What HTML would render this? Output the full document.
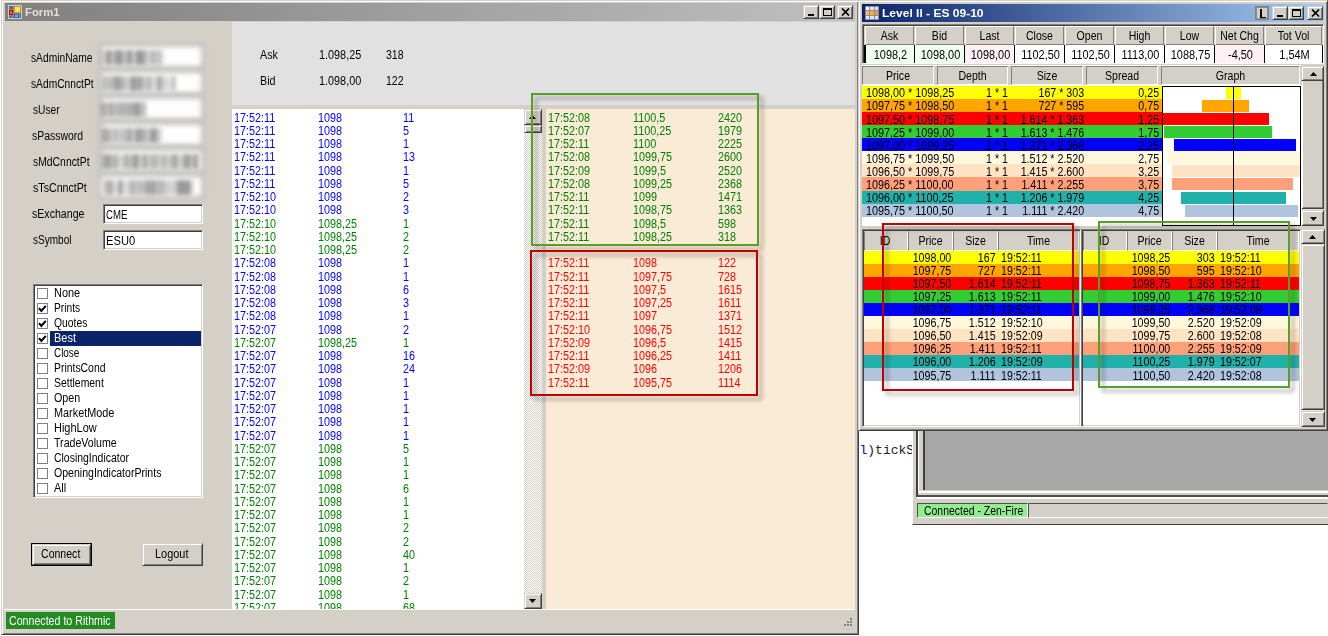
<!DOCTYPE html><html><head><meta charset="utf-8"><style>
*{margin:0;padding:0;box-sizing:border-box}
html,body{width:1328px;height:636px;overflow:hidden;background:#fff;font-family:"Liberation Sans",sans-serif;font-size:12px;color:#000}
.ab{position:absolute}
.t{position:absolute;white-space:nowrap}
.raised{border-style:solid;border-width:1px;border-color:#D4D0C8 #404040 #404040 #D4D0C8;box-shadow:inset 1px 1px 0 #fff,inset -1px -1px 0 #808080;background:#D4D0C8}
.sunken{border-style:solid;border-width:1px;border-color:#808080 #fff #fff #808080;box-shadow:inset 1px 1px 0 #404040, inset -1px -1px 0 #D4D0C8}
.hdr{position:absolute;background:#D4D0C8;border-style:solid;border-width:1px;border-color:#fff #808080 #808080 #fff}
</style></head><body>

<div class="ab" style="left:1px;top:0;width:858px;height:635px;background:#D4D0C8;border:1px solid;border-color:#D4D0C8 #404040 #404040 #D4D0C8;box-shadow:inset 1px 1px 0 #fff, inset -1px -1px 0 #808080"></div>
<div class="ab" style="left:5px;top:3px;width:850px;height:18px;background:linear-gradient(to right,#808080,#C0C0C0)"></div>
<svg class="ab" style="left:8px;top:5px" width="14" height="14" viewBox="0 0 14 14">
<rect x="0" y="0" width="14" height="14" fill="#c8ccd4"/>
<rect x="1" y="1" width="12" height="12" fill="#8c8c8c"/>
<rect x="1" y="1" width="4" height="3" fill="#6a6a6a"/>
<rect x="1" y="5" width="4" height="5" fill="#a01010"/><rect x="2" y="6" width="2" height="3" fill="#f06060"/>
<rect x="6" y="1" width="7" height="7" fill="#c89800"/><rect x="7" y="2" width="5" height="5" fill="#ffe070"/>
<rect x="6" y="9" width="5" height="4" fill="#2060d0"/><rect x="7" y="10" width="3" height="2" fill="#80b8ff"/>
<rect x="1" y="11" width="2" height="2" fill="#6a6a6a"/><rect x="4" y="11" width="1" height="2" fill="#6a6a6a"/><rect x="12" y="9" width="1" height="4" fill="#6a6a6a"/>
</svg>
<div class="t" style="left:24.80px;top:7.21px;font-size:11.5px;line-height:11.5px;color:#E4E0D8;font-weight:bold;transform:scaleX(0.98);transform-origin:0 0;">Form1</div>
<div class="ab raised" style="left:803px;top:5px;width:16px;height:14px"><div class="ab" style="left:4px;top:8px;width:6px;height:2px;background:#000"></div></div>
<div class="ab raised" style="left:819px;top:5px;width:16px;height:14px"><div class="ab" style="left:3px;top:2px;width:9px;height:8px;border:1px solid #000;border-top-width:2px"></div></div>
<div class="ab raised" style="left:837px;top:5px;width:16px;height:14px"><svg class="ab" style="left:3px;top:2px" width="9" height="8"><path d="M1 0.5L8 7.5M8 0.5L1 7.5" stroke="#000" stroke-width="1.7"/></svg></div>
<div class="t" style="left:31.20px;top:52.40px;font-size:12px;line-height:12px;transform:scaleX(0.854);transform-origin:0 0;">sAdminName</div>
<div class="t" style="left:31.20px;top:78.40px;font-size:12px;line-height:12px;transform:scaleX(0.854);transform-origin:0 0;">sAdmCnnctPt</div>
<div class="t" style="left:33.30px;top:104.40px;font-size:12px;line-height:12px;transform:scaleX(0.85);transform-origin:0 0;">sUser</div>
<div class="t" style="left:31.50px;top:130.40px;font-size:12px;line-height:12px;transform:scaleX(0.87);transform-origin:0 0;">sPassword</div>
<div class="t" style="left:33.30px;top:156.40px;font-size:12px;line-height:12px;transform:scaleX(0.865);transform-origin:0 0;">sMdCnnctPt</div>
<div class="t" style="left:33.30px;top:182.40px;font-size:12px;line-height:12px;transform:scaleX(0.887);transform-origin:0 0;">sTsCnnctPt</div>
<div class="t" style="left:31.50px;top:208.40px;font-size:12px;line-height:12px;transform:scaleX(0.883);transform-origin:0 0;">sExchange</div>
<div class="t" style="left:33.30px;top:234.40px;font-size:12px;line-height:12px;transform:scaleX(0.837);transform-origin:0 0;">sSymbol</div>
<div class="ab" style="left:98px;top:43.4px;width:107px;height:27px;background:#c6c4c0;filter:blur(2.5px)"></div>
<div class="ab" style="left:102px;top:47.4px;width:99px;height:19px;background:#fefefe;filter:blur(2.5px)"></div>
<div class="ab" style="left:101px;top:49.9px;width:62px;height:15px;background:linear-gradient(90deg,#8a8a8a 0px 2px,#e0e0e0 2px 5px,#7a7a7a 5px 6px,#7a7a7a 6px 10px,#c8c8c8 10px 12px,#c8c8c8 12px 13px,#7a7a7a 13px 15px,#b0b0b0 15px 16px,#7a7a7a 16px 19px,#7a7a7a 19px 21px,#b0b0b0 21px 25px,#c8c8c8 25px 26px,#8a8a8a 26px 27px,#7a7a7a 27px 31px,#c8c8c8 31px 35px,#7a7a7a 35px 38px,#7a7a7a 38px 40px,#8a8a8a 40px 44px,#b0b0b0 44px 46px,#c8c8c8 46px 48px,#c8c8c8 48px 49px,#c8c8c8 49px 51px,#7a7a7a 51px 53px,#c8c8c8 53px 57px,#9a9a9a 57px 59px,#c8c8c8 59px 60px,#c8c8c8 60px 61px,#c8c8c8 61px 62px);filter:blur(2.2px);opacity:.8"></div>
<div class="ab" style="left:98px;top:69.4px;width:107px;height:27px;background:#c6c4c0;filter:blur(2.5px)"></div>
<div class="ab" style="left:102px;top:73.4px;width:99px;height:19px;background:#fefefe;filter:blur(2.5px)"></div>
<div class="ab" style="left:101px;top:75.9px;width:75px;height:15px;background:linear-gradient(90deg,#b0b0b0 0px 2px,#b0b0b0 2px 6px,#b0b0b0 6px 8px,#b0b0b0 8px 12px,#9a9a9a 12px 14px,#8a8a8a 14px 16px,#7a7a7a 16px 18px,#9a9a9a 18px 22px,#b0b0b0 22px 26px,#e0e0e0 26px 28px,#9a9a9a 28px 31px,#7a7a7a 31px 35px,#c8c8c8 35px 36px,#8a8a8a 36px 39px,#8a8a8a 39px 41px,#b0b0b0 41px 44px,#e0e0e0 44px 45px,#c8c8c8 45px 46px,#9a9a9a 46px 50px,#e0e0e0 50px 52px,#c8c8c8 52px 54px,#c8c8c8 54px 57px,#7a7a7a 57px 60px,#9a9a9a 60px 61px,#e0e0e0 61px 64px,#7a7a7a 64px 65px,#e0e0e0 65px 67px,#e0e0e0 67px 71px,#9a9a9a 71px 74px,#e0e0e0 74px 77px);filter:blur(2.2px);opacity:.8"></div>
<div class="ab" style="left:98px;top:95.4px;width:107px;height:27px;background:#c6c4c0;filter:blur(2.5px)"></div>
<div class="ab" style="left:102px;top:99.4px;width:99px;height:19px;background:#fefefe;filter:blur(2.5px)"></div>
<div class="ab" style="left:101px;top:101.9px;width:45px;height:15px;background:linear-gradient(90deg,#7a7a7a 0px 2px,#9a9a9a 2px 5px,#c8c8c8 5px 7px,#b0b0b0 7px 8px,#8a8a8a 8px 9px,#8a8a8a 9px 11px,#b0b0b0 11px 13px,#b0b0b0 13px 16px,#8a8a8a 16px 17px,#b0b0b0 17px 20px,#9a9a9a 20px 24px,#b0b0b0 24px 26px,#9a9a9a 26px 30px,#9a9a9a 30px 33px,#8a8a8a 33px 36px,#7a7a7a 36px 38px,#8a8a8a 38px 40px,#e0e0e0 40px 42px,#7a7a7a 42px 44px,#c8c8c8 44px 47px);filter:blur(2.2px);opacity:.8"></div>
<div class="ab" style="left:98px;top:121.4px;width:107px;height:27px;background:#c6c4c0;filter:blur(2.5px)"></div>
<div class="ab" style="left:102px;top:125.4px;width:99px;height:19px;background:#fefefe;filter:blur(2.5px)"></div>
<div class="ab" style="left:101px;top:127.9px;width:61px;height:15px;background:linear-gradient(90deg,#9a9a9a 0px 2px,#7a7a7a 2px 4px,#b0b0b0 4px 6px,#9a9a9a 6px 10px,#c8c8c8 10px 14px,#8a8a8a 14px 16px,#c8c8c8 16px 20px,#b0b0b0 20px 21px,#b0b0b0 21px 25px,#b0b0b0 25px 28px,#7a7a7a 28px 31px,#e0e0e0 31px 34px,#7a7a7a 34px 37px,#7a7a7a 37px 39px,#b0b0b0 39px 41px,#7a7a7a 41px 43px,#c8c8c8 43px 45px,#7a7a7a 45px 46px,#c8c8c8 46px 47px,#c8c8c8 47px 49px,#9a9a9a 49px 50px,#7a7a7a 50px 54px,#8a8a8a 54px 55px,#b0b0b0 55px 59px,#e0e0e0 59px 61px);filter:blur(2.2px);opacity:.8"></div>
<div class="ab" style="left:98px;top:147.4px;width:107px;height:27px;background:#c6c4c0;filter:blur(2.5px)"></div>
<div class="ab" style="left:102px;top:151.4px;width:99px;height:19px;background:#fefefe;filter:blur(2.5px)"></div>
<div class="ab" style="left:101px;top:153.9px;width:98px;height:15px;background:linear-gradient(90deg,#9a9a9a 0px 2px,#9a9a9a 2px 6px,#7a7a7a 6px 9px,#b0b0b0 9px 10px,#b0b0b0 10px 13px,#9a9a9a 13px 16px,#8a8a8a 16px 17px,#e0e0e0 17px 18px,#e0e0e0 18px 20px,#b0b0b0 20px 22px,#c8c8c8 22px 24px,#8a8a8a 24px 25px,#9a9a9a 25px 29px,#e0e0e0 29px 31px,#7a7a7a 31px 35px,#9a9a9a 35px 39px,#e0e0e0 39px 40px,#c8c8c8 40px 42px,#8a8a8a 42px 44px,#8a8a8a 44px 46px,#c8c8c8 46px 50px,#9a9a9a 50px 54px,#c8c8c8 54px 56px,#8a8a8a 56px 58px,#e0e0e0 58px 61px,#8a8a8a 61px 63px,#b0b0b0 63px 67px,#e0e0e0 67px 69px,#7a7a7a 69px 70px,#b0b0b0 70px 72px,#8a8a8a 72px 74px,#9a9a9a 74px 78px,#e0e0e0 78px 81px,#9a9a9a 81px 83px,#8a8a8a 83px 84px,#8a8a8a 84px 85px,#8a8a8a 85px 88px,#8a8a8a 88px 90px,#c8c8c8 90px 93px,#7a7a7a 93px 97px,#e0e0e0 97px 100px);filter:blur(2.2px);opacity:.8"></div>
<div class="ab" style="left:98px;top:173.4px;width:107px;height:27px;background:#c6c4c0;filter:blur(2.5px)"></div>
<div class="ab" style="left:102px;top:177.4px;width:99px;height:19px;background:#fefefe;filter:blur(2.5px)"></div>
<div class="ab" style="left:101px;top:179.9px;width:93px;height:15px;background:linear-gradient(90deg,#e0e0e0 0px 2px,#e0e0e0 2px 3px,#b0b0b0 3px 4px,#b0b0b0 4px 6px,#b0b0b0 6px 8px,#7a7a7a 8px 10px,#b0b0b0 10px 13px,#e0e0e0 13px 16px,#e0e0e0 16px 17px,#8a8a8a 17px 19px,#7a7a7a 19px 21px,#c8c8c8 21px 23px,#e0e0e0 23px 26px,#c8c8c8 26px 28px,#b0b0b0 28px 32px,#8a8a8a 32px 34px,#c8c8c8 34px 38px,#7a7a7a 38px 40px,#e0e0e0 40px 41px,#c8c8c8 41px 42px,#b0b0b0 42px 44px,#8a8a8a 44px 46px,#9a9a9a 46px 47px,#9a9a9a 47px 49px,#8a8a8a 49px 53px,#9a9a9a 53px 57px,#c8c8c8 57px 59px,#8a8a8a 59px 62px,#e0e0e0 62px 63px,#b0b0b0 63px 65px,#c8c8c8 65px 69px,#c8c8c8 69px 72px,#c8c8c8 72px 74px,#c8c8c8 74px 76px,#7a7a7a 76px 80px,#8a8a8a 80px 83px,#7a7a7a 83px 87px,#8a8a8a 87px 89px,#b0b0b0 89px 91px,#e0e0e0 91px 95px);filter:blur(2.2px);opacity:.8"></div>
<div class="ab sunken" style="left:103px;top:203.9px;width:100px;height:20px;background:#fff"></div>
<div class="t" style="left:106.00px;top:208.80px;font-size:12px;line-height:12px;transform:scaleX(0.8);transform-origin:0 0;">CME</div>
<div class="ab sunken" style="left:103px;top:229.9px;width:100px;height:20px;background:#fff"></div>
<div class="t" style="left:106.00px;top:234.80px;font-size:12px;line-height:12px;transform:scaleX(0.93);transform-origin:0 0;">ESU0</div>
<div class="ab sunken" style="left:33px;top:284px;width:170px;height:214px;background:#fff"></div>
<div class="ab" style="left:37px;top:288.0px;width:11px;height:11px;border:1px solid #808080;background:#fff"></div>
<div class="t" style="left:54.20px;top:286.70px;font-size:12px;line-height:12px;transform:scaleX(0.914);transform-origin:0 0;">None</div>
<div class="ab" style="left:37px;top:303.0px;width:11px;height:11px;border:1px solid #808080;background:#fff"></div>
<svg class="ab" style="left:37px;top:303.0px" width="11" height="11"><path d="M2 5.2L4.3 8L8.8 2.8" stroke="#000" stroke-width="2" fill="none"/></svg>
<div class="t" style="left:54.20px;top:301.75px;font-size:12px;line-height:12px;transform:scaleX(0.853);transform-origin:0 0;">Prints</div>
<div class="ab" style="left:37px;top:317.9px;width:11px;height:11px;border:1px solid #808080;background:#fff"></div>
<svg class="ab" style="left:37px;top:317.9px" width="11" height="11"><path d="M2 5.2L4.3 8L8.8 2.8" stroke="#000" stroke-width="2" fill="none"/></svg>
<div class="t" style="left:54.20px;top:316.80px;font-size:12px;line-height:12px;transform:scaleX(0.864);transform-origin:0 0;">Quotes</div>
<div class="ab" style="left:37px;top:332.9px;width:11px;height:11px;border:1px solid #808080;background:#fff"></div>
<svg class="ab" style="left:37px;top:332.9px" width="11" height="11"><path d="M2 5.2L4.3 8L8.8 2.8" stroke="#000" stroke-width="2" fill="none"/></svg>
<div class="ab" style="left:50px;top:331.0px;width:151px;height:15px;background:#0A246A"></div>
<div class="t" style="left:54.20px;top:331.85px;font-size:12px;line-height:12px;color:#fff;transform:scaleX(0.913);transform-origin:0 0;">Best</div>
<div class="ab" style="left:37px;top:347.8px;width:11px;height:11px;border:1px solid #808080;background:#fff"></div>
<div class="t" style="left:54.20px;top:346.90px;font-size:12px;line-height:12px;transform:scaleX(0.826);transform-origin:0 0;">Close</div>
<div class="ab" style="left:37px;top:362.8px;width:11px;height:11px;border:1px solid #808080;background:#fff"></div>
<div class="t" style="left:54.20px;top:361.95px;font-size:12px;line-height:12px;transform:scaleX(0.867);transform-origin:0 0;">PrintsCond</div>
<div class="ab" style="left:37px;top:377.8px;width:11px;height:11px;border:1px solid #808080;background:#fff"></div>
<div class="t" style="left:54.20px;top:377.00px;font-size:12px;line-height:12px;transform:scaleX(0.868);transform-origin:0 0;">Settlement</div>
<div class="ab" style="left:37px;top:392.7px;width:11px;height:11px;border:1px solid #808080;background:#fff"></div>
<div class="t" style="left:54.20px;top:392.05px;font-size:12px;line-height:12px;transform:scaleX(0.897);transform-origin:0 0;">Open</div>
<div class="ab" style="left:37px;top:407.7px;width:11px;height:11px;border:1px solid #808080;background:#fff"></div>
<div class="t" style="left:54.20px;top:407.10px;font-size:12px;line-height:12px;transform:scaleX(0.905);transform-origin:0 0;">MarketMode</div>
<div class="ab" style="left:37px;top:422.6px;width:11px;height:11px;border:1px solid #808080;background:#fff"></div>
<div class="t" style="left:54.20px;top:422.15px;font-size:12px;line-height:12px;transform:scaleX(0.913);transform-origin:0 0;">HighLow</div>
<div class="ab" style="left:37px;top:437.6px;width:11px;height:11px;border:1px solid #808080;background:#fff"></div>
<div class="t" style="left:54.20px;top:437.20px;font-size:12px;line-height:12px;transform:scaleX(0.885);transform-origin:0 0;">TradeVolume</div>
<div class="ab" style="left:37px;top:452.6px;width:11px;height:11px;border:1px solid #808080;background:#fff"></div>
<div class="t" style="left:54.20px;top:452.25px;font-size:12px;line-height:12px;transform:scaleX(0.871);transform-origin:0 0;">ClosingIndicator</div>
<div class="ab" style="left:37px;top:467.5px;width:11px;height:11px;border:1px solid #808080;background:#fff"></div>
<div class="t" style="left:54.20px;top:467.30px;font-size:12px;line-height:12px;transform:scaleX(0.88);transform-origin:0 0;">OpeningIndicatorPrints</div>
<div class="ab" style="left:37px;top:482.5px;width:11px;height:11px;border:1px solid #808080;background:#fff"></div>
<div class="t" style="left:54.20px;top:482.35px;font-size:12px;line-height:12px;transform:scaleX(0.908);transform-origin:0 0;">All</div>
<div class="ab" style="left:31px;top:543px;width:61px;height:23px;border:1px solid #000"><div class="ab raised" style="left:0;top:0;width:59px;height:21px"></div></div>
<div class="t" style="left:41.00px;top:548.30px;font-size:12px;line-height:12px;transform:scaleX(0.88);transform-origin:0 0;">Connect</div>
<div class="ab raised" style="left:142px;top:543px;width:61px;height:23px"></div>
<div class="t" style="left:155.00px;top:548.30px;font-size:12px;line-height:12px;transform:scaleX(0.911);transform-origin:0 0;">Logout</div>
<div class="ab" style="left:232px;top:22px;width:623px;height:83px;background:#E1E1E1"></div>
<div class="t" style="left:259.50px;top:49.10px;font-size:12px;line-height:12px;transform:scaleX(0.895);transform-origin:0 0;">Ask</div>
<div class="t" style="left:319.30px;top:49.10px;font-size:12px;line-height:12px;transform:scaleX(0.904);transform-origin:0 0;">1.098,25</div>
<div class="t" style="left:386.20px;top:49.10px;font-size:12px;line-height:12px;transform:scaleX(0.88);transform-origin:0 0;">318</div>
<div class="t" style="left:259.50px;top:74.70px;font-size:12px;line-height:12px;transform:scaleX(0.895);transform-origin:0 0;">Bid</div>
<div class="t" style="left:319.30px;top:74.70px;font-size:12px;line-height:12px;transform:scaleX(0.904);transform-origin:0 0;">1.098,00</div>
<div class="t" style="left:386.20px;top:74.70px;font-size:12px;line-height:12px;transform:scaleX(0.88);transform-origin:0 0;">122</div>
<div class="ab" style="left:232px;top:109px;width:292px;height:500px;background:#fff"></div>
<div class="ab" style="left:232px;top:109px;width:292px;height:500px;overflow:hidden">
<div class="t" style="left:1.50px;top:3.00px;font-size:12px;line-height:12px;color:#0000FF;transform:scaleX(0.9);transform-origin:0 0;">17:52:11</div>
<div class="t" style="left:86.20px;top:3.00px;font-size:12px;line-height:12px;color:#0000FF;transform:scaleX(0.9);transform-origin:0 0;">1098</div>
<div class="t" style="left:171.20px;top:3.00px;font-size:12px;line-height:12px;color:#0000FF;transform:scaleX(0.9);transform-origin:0 0;">11</div>
<div class="t" style="left:1.50px;top:16.00px;font-size:12px;line-height:12px;color:#0000FF;transform:scaleX(0.9);transform-origin:0 0;">17:52:11</div>
<div class="t" style="left:86.20px;top:16.00px;font-size:12px;line-height:12px;color:#0000FF;transform:scaleX(0.9);transform-origin:0 0;">1098</div>
<div class="t" style="left:171.20px;top:16.00px;font-size:12px;line-height:12px;color:#0000FF;transform:scaleX(0.9);transform-origin:0 0;">5</div>
<div class="t" style="left:1.50px;top:29.00px;font-size:12px;line-height:12px;color:#0000FF;transform:scaleX(0.9);transform-origin:0 0;">17:52:11</div>
<div class="t" style="left:86.20px;top:29.00px;font-size:12px;line-height:12px;color:#0000FF;transform:scaleX(0.9);transform-origin:0 0;">1098</div>
<div class="t" style="left:171.20px;top:29.00px;font-size:12px;line-height:12px;color:#0000FF;transform:scaleX(0.9);transform-origin:0 0;">1</div>
<div class="t" style="left:1.50px;top:42.00px;font-size:12px;line-height:12px;color:#0000FF;transform:scaleX(0.9);transform-origin:0 0;">17:52:11</div>
<div class="t" style="left:86.20px;top:42.00px;font-size:12px;line-height:12px;color:#0000FF;transform:scaleX(0.9);transform-origin:0 0;">1098</div>
<div class="t" style="left:171.20px;top:42.00px;font-size:12px;line-height:12px;color:#0000FF;transform:scaleX(0.9);transform-origin:0 0;">13</div>
<div class="t" style="left:1.50px;top:56.00px;font-size:12px;line-height:12px;color:#0000FF;transform:scaleX(0.9);transform-origin:0 0;">17:52:11</div>
<div class="t" style="left:86.20px;top:56.00px;font-size:12px;line-height:12px;color:#0000FF;transform:scaleX(0.9);transform-origin:0 0;">1098</div>
<div class="t" style="left:171.20px;top:56.00px;font-size:12px;line-height:12px;color:#0000FF;transform:scaleX(0.9);transform-origin:0 0;">1</div>
<div class="t" style="left:1.50px;top:69.00px;font-size:12px;line-height:12px;color:#0000FF;transform:scaleX(0.9);transform-origin:0 0;">17:52:11</div>
<div class="t" style="left:86.20px;top:69.00px;font-size:12px;line-height:12px;color:#0000FF;transform:scaleX(0.9);transform-origin:0 0;">1098</div>
<div class="t" style="left:171.20px;top:69.00px;font-size:12px;line-height:12px;color:#0000FF;transform:scaleX(0.9);transform-origin:0 0;">5</div>
<div class="t" style="left:1.50px;top:82.00px;font-size:12px;line-height:12px;color:#0000FF;transform:scaleX(0.9);transform-origin:0 0;">17:52:10</div>
<div class="t" style="left:86.20px;top:82.00px;font-size:12px;line-height:12px;color:#0000FF;transform:scaleX(0.9);transform-origin:0 0;">1098</div>
<div class="t" style="left:171.20px;top:82.00px;font-size:12px;line-height:12px;color:#0000FF;transform:scaleX(0.9);transform-origin:0 0;">2</div>
<div class="t" style="left:1.50px;top:95.00px;font-size:12px;line-height:12px;color:#0000FF;transform:scaleX(0.9);transform-origin:0 0;">17:52:10</div>
<div class="t" style="left:86.20px;top:95.00px;font-size:12px;line-height:12px;color:#0000FF;transform:scaleX(0.9);transform-origin:0 0;">1098</div>
<div class="t" style="left:171.20px;top:95.00px;font-size:12px;line-height:12px;color:#0000FF;transform:scaleX(0.9);transform-origin:0 0;">3</div>
<div class="t" style="left:1.50px;top:109.00px;font-size:12px;line-height:12px;color:#008000;transform:scaleX(0.9);transform-origin:0 0;">17:52:10</div>
<div class="t" style="left:86.20px;top:109.00px;font-size:12px;line-height:12px;color:#008000;transform:scaleX(0.9);transform-origin:0 0;">1098,25</div>
<div class="t" style="left:171.20px;top:109.00px;font-size:12px;line-height:12px;color:#008000;transform:scaleX(0.9);transform-origin:0 0;">1</div>
<div class="t" style="left:1.50px;top:122.00px;font-size:12px;line-height:12px;color:#008000;transform:scaleX(0.9);transform-origin:0 0;">17:52:10</div>
<div class="t" style="left:86.20px;top:122.00px;font-size:12px;line-height:12px;color:#008000;transform:scaleX(0.9);transform-origin:0 0;">1098,25</div>
<div class="t" style="left:171.20px;top:122.00px;font-size:12px;line-height:12px;color:#008000;transform:scaleX(0.9);transform-origin:0 0;">2</div>
<div class="t" style="left:1.50px;top:135.00px;font-size:12px;line-height:12px;color:#008000;transform:scaleX(0.9);transform-origin:0 0;">17:52:10</div>
<div class="t" style="left:86.20px;top:135.00px;font-size:12px;line-height:12px;color:#008000;transform:scaleX(0.9);transform-origin:0 0;">1098,25</div>
<div class="t" style="left:171.20px;top:135.00px;font-size:12px;line-height:12px;color:#008000;transform:scaleX(0.9);transform-origin:0 0;">2</div>
<div class="t" style="left:1.50px;top:148.00px;font-size:12px;line-height:12px;color:#0000FF;transform:scaleX(0.9);transform-origin:0 0;">17:52:08</div>
<div class="t" style="left:86.20px;top:148.00px;font-size:12px;line-height:12px;color:#0000FF;transform:scaleX(0.9);transform-origin:0 0;">1098</div>
<div class="t" style="left:171.20px;top:148.00px;font-size:12px;line-height:12px;color:#0000FF;transform:scaleX(0.9);transform-origin:0 0;">1</div>
<div class="t" style="left:1.50px;top:162.00px;font-size:12px;line-height:12px;color:#0000FF;transform:scaleX(0.9);transform-origin:0 0;">17:52:08</div>
<div class="t" style="left:86.20px;top:162.00px;font-size:12px;line-height:12px;color:#0000FF;transform:scaleX(0.9);transform-origin:0 0;">1098</div>
<div class="t" style="left:171.20px;top:162.00px;font-size:12px;line-height:12px;color:#0000FF;transform:scaleX(0.9);transform-origin:0 0;">1</div>
<div class="t" style="left:1.50px;top:175.00px;font-size:12px;line-height:12px;color:#0000FF;transform:scaleX(0.9);transform-origin:0 0;">17:52:08</div>
<div class="t" style="left:86.20px;top:175.00px;font-size:12px;line-height:12px;color:#0000FF;transform:scaleX(0.9);transform-origin:0 0;">1098</div>
<div class="t" style="left:171.20px;top:175.00px;font-size:12px;line-height:12px;color:#0000FF;transform:scaleX(0.9);transform-origin:0 0;">6</div>
<div class="t" style="left:1.50px;top:188.00px;font-size:12px;line-height:12px;color:#0000FF;transform:scaleX(0.9);transform-origin:0 0;">17:52:08</div>
<div class="t" style="left:86.20px;top:188.00px;font-size:12px;line-height:12px;color:#0000FF;transform:scaleX(0.9);transform-origin:0 0;">1098</div>
<div class="t" style="left:171.20px;top:188.00px;font-size:12px;line-height:12px;color:#0000FF;transform:scaleX(0.9);transform-origin:0 0;">3</div>
<div class="t" style="left:1.50px;top:201.00px;font-size:12px;line-height:12px;color:#0000FF;transform:scaleX(0.9);transform-origin:0 0;">17:52:08</div>
<div class="t" style="left:86.20px;top:201.00px;font-size:12px;line-height:12px;color:#0000FF;transform:scaleX(0.9);transform-origin:0 0;">1098</div>
<div class="t" style="left:171.20px;top:201.00px;font-size:12px;line-height:12px;color:#0000FF;transform:scaleX(0.9);transform-origin:0 0;">1</div>
<div class="t" style="left:1.50px;top:215.00px;font-size:12px;line-height:12px;color:#0000FF;transform:scaleX(0.9);transform-origin:0 0;">17:52:07</div>
<div class="t" style="left:86.20px;top:215.00px;font-size:12px;line-height:12px;color:#0000FF;transform:scaleX(0.9);transform-origin:0 0;">1098</div>
<div class="t" style="left:171.20px;top:215.00px;font-size:12px;line-height:12px;color:#0000FF;transform:scaleX(0.9);transform-origin:0 0;">2</div>
<div class="t" style="left:1.50px;top:228.00px;font-size:12px;line-height:12px;color:#008000;transform:scaleX(0.9);transform-origin:0 0;">17:52:07</div>
<div class="t" style="left:86.20px;top:228.00px;font-size:12px;line-height:12px;color:#008000;transform:scaleX(0.9);transform-origin:0 0;">1098,25</div>
<div class="t" style="left:171.20px;top:228.00px;font-size:12px;line-height:12px;color:#008000;transform:scaleX(0.9);transform-origin:0 0;">1</div>
<div class="t" style="left:1.50px;top:241.00px;font-size:12px;line-height:12px;color:#0000FF;transform:scaleX(0.9);transform-origin:0 0;">17:52:07</div>
<div class="t" style="left:86.20px;top:241.00px;font-size:12px;line-height:12px;color:#0000FF;transform:scaleX(0.9);transform-origin:0 0;">1098</div>
<div class="t" style="left:171.20px;top:241.00px;font-size:12px;line-height:12px;color:#0000FF;transform:scaleX(0.9);transform-origin:0 0;">16</div>
<div class="t" style="left:1.50px;top:254.00px;font-size:12px;line-height:12px;color:#0000FF;transform:scaleX(0.9);transform-origin:0 0;">17:52:07</div>
<div class="t" style="left:86.20px;top:254.00px;font-size:12px;line-height:12px;color:#0000FF;transform:scaleX(0.9);transform-origin:0 0;">1098</div>
<div class="t" style="left:171.20px;top:254.00px;font-size:12px;line-height:12px;color:#0000FF;transform:scaleX(0.9);transform-origin:0 0;">24</div>
<div class="t" style="left:1.50px;top:268.00px;font-size:12px;line-height:12px;color:#0000FF;transform:scaleX(0.9);transform-origin:0 0;">17:52:07</div>
<div class="t" style="left:86.20px;top:268.00px;font-size:12px;line-height:12px;color:#0000FF;transform:scaleX(0.9);transform-origin:0 0;">1098</div>
<div class="t" style="left:171.20px;top:268.00px;font-size:12px;line-height:12px;color:#0000FF;transform:scaleX(0.9);transform-origin:0 0;">1</div>
<div class="t" style="left:1.50px;top:281.00px;font-size:12px;line-height:12px;color:#0000FF;transform:scaleX(0.9);transform-origin:0 0;">17:52:07</div>
<div class="t" style="left:86.20px;top:281.00px;font-size:12px;line-height:12px;color:#0000FF;transform:scaleX(0.9);transform-origin:0 0;">1098</div>
<div class="t" style="left:171.20px;top:281.00px;font-size:12px;line-height:12px;color:#0000FF;transform:scaleX(0.9);transform-origin:0 0;">1</div>
<div class="t" style="left:1.50px;top:294.00px;font-size:12px;line-height:12px;color:#0000FF;transform:scaleX(0.9);transform-origin:0 0;">17:52:07</div>
<div class="t" style="left:86.20px;top:294.00px;font-size:12px;line-height:12px;color:#0000FF;transform:scaleX(0.9);transform-origin:0 0;">1098</div>
<div class="t" style="left:171.20px;top:294.00px;font-size:12px;line-height:12px;color:#0000FF;transform:scaleX(0.9);transform-origin:0 0;">1</div>
<div class="t" style="left:1.50px;top:307.00px;font-size:12px;line-height:12px;color:#0000FF;transform:scaleX(0.9);transform-origin:0 0;">17:52:07</div>
<div class="t" style="left:86.20px;top:307.00px;font-size:12px;line-height:12px;color:#0000FF;transform:scaleX(0.9);transform-origin:0 0;">1098</div>
<div class="t" style="left:171.20px;top:307.00px;font-size:12px;line-height:12px;color:#0000FF;transform:scaleX(0.9);transform-origin:0 0;">1</div>
<div class="t" style="left:1.50px;top:321.00px;font-size:12px;line-height:12px;color:#0000FF;transform:scaleX(0.9);transform-origin:0 0;">17:52:07</div>
<div class="t" style="left:86.20px;top:321.00px;font-size:12px;line-height:12px;color:#0000FF;transform:scaleX(0.9);transform-origin:0 0;">1098</div>
<div class="t" style="left:171.20px;top:321.00px;font-size:12px;line-height:12px;color:#0000FF;transform:scaleX(0.9);transform-origin:0 0;">1</div>
<div class="t" style="left:1.50px;top:334.00px;font-size:12px;line-height:12px;color:#008000;transform:scaleX(0.9);transform-origin:0 0;">17:52:07</div>
<div class="t" style="left:86.20px;top:334.00px;font-size:12px;line-height:12px;color:#008000;transform:scaleX(0.9);transform-origin:0 0;">1098</div>
<div class="t" style="left:171.20px;top:334.00px;font-size:12px;line-height:12px;color:#008000;transform:scaleX(0.9);transform-origin:0 0;">5</div>
<div class="t" style="left:1.50px;top:347.00px;font-size:12px;line-height:12px;color:#008000;transform:scaleX(0.9);transform-origin:0 0;">17:52:07</div>
<div class="t" style="left:86.20px;top:347.00px;font-size:12px;line-height:12px;color:#008000;transform:scaleX(0.9);transform-origin:0 0;">1098</div>
<div class="t" style="left:171.20px;top:347.00px;font-size:12px;line-height:12px;color:#008000;transform:scaleX(0.9);transform-origin:0 0;">1</div>
<div class="t" style="left:1.50px;top:360.00px;font-size:12px;line-height:12px;color:#008000;transform:scaleX(0.9);transform-origin:0 0;">17:52:07</div>
<div class="t" style="left:86.20px;top:360.00px;font-size:12px;line-height:12px;color:#008000;transform:scaleX(0.9);transform-origin:0 0;">1098</div>
<div class="t" style="left:171.20px;top:360.00px;font-size:12px;line-height:12px;color:#008000;transform:scaleX(0.9);transform-origin:0 0;">1</div>
<div class="t" style="left:1.50px;top:374.00px;font-size:12px;line-height:12px;color:#008000;transform:scaleX(0.9);transform-origin:0 0;">17:52:07</div>
<div class="t" style="left:86.20px;top:374.00px;font-size:12px;line-height:12px;color:#008000;transform:scaleX(0.9);transform-origin:0 0;">1098</div>
<div class="t" style="left:171.20px;top:374.00px;font-size:12px;line-height:12px;color:#008000;transform:scaleX(0.9);transform-origin:0 0;">6</div>
<div class="t" style="left:1.50px;top:387.00px;font-size:12px;line-height:12px;color:#008000;transform:scaleX(0.9);transform-origin:0 0;">17:52:07</div>
<div class="t" style="left:86.20px;top:387.00px;font-size:12px;line-height:12px;color:#008000;transform:scaleX(0.9);transform-origin:0 0;">1098</div>
<div class="t" style="left:171.20px;top:387.00px;font-size:12px;line-height:12px;color:#008000;transform:scaleX(0.9);transform-origin:0 0;">1</div>
<div class="t" style="left:1.50px;top:400.00px;font-size:12px;line-height:12px;color:#008000;transform:scaleX(0.9);transform-origin:0 0;">17:52:07</div>
<div class="t" style="left:86.20px;top:400.00px;font-size:12px;line-height:12px;color:#008000;transform:scaleX(0.9);transform-origin:0 0;">1098</div>
<div class="t" style="left:171.20px;top:400.00px;font-size:12px;line-height:12px;color:#008000;transform:scaleX(0.9);transform-origin:0 0;">1</div>
<div class="t" style="left:1.50px;top:413.00px;font-size:12px;line-height:12px;color:#008000;transform:scaleX(0.9);transform-origin:0 0;">17:52:07</div>
<div class="t" style="left:86.20px;top:413.00px;font-size:12px;line-height:12px;color:#008000;transform:scaleX(0.9);transform-origin:0 0;">1098</div>
<div class="t" style="left:171.20px;top:413.00px;font-size:12px;line-height:12px;color:#008000;transform:scaleX(0.9);transform-origin:0 0;">2</div>
<div class="t" style="left:1.50px;top:427.00px;font-size:12px;line-height:12px;color:#008000;transform:scaleX(0.9);transform-origin:0 0;">17:52:07</div>
<div class="t" style="left:86.20px;top:427.00px;font-size:12px;line-height:12px;color:#008000;transform:scaleX(0.9);transform-origin:0 0;">1098</div>
<div class="t" style="left:171.20px;top:427.00px;font-size:12px;line-height:12px;color:#008000;transform:scaleX(0.9);transform-origin:0 0;">2</div>
<div class="t" style="left:1.50px;top:440.00px;font-size:12px;line-height:12px;color:#008000;transform:scaleX(0.9);transform-origin:0 0;">17:52:07</div>
<div class="t" style="left:86.20px;top:440.00px;font-size:12px;line-height:12px;color:#008000;transform:scaleX(0.9);transform-origin:0 0;">1098</div>
<div class="t" style="left:171.20px;top:440.00px;font-size:12px;line-height:12px;color:#008000;transform:scaleX(0.9);transform-origin:0 0;">40</div>
<div class="t" style="left:1.50px;top:453.00px;font-size:12px;line-height:12px;color:#008000;transform:scaleX(0.9);transform-origin:0 0;">17:52:07</div>
<div class="t" style="left:86.20px;top:453.00px;font-size:12px;line-height:12px;color:#008000;transform:scaleX(0.9);transform-origin:0 0;">1098</div>
<div class="t" style="left:171.20px;top:453.00px;font-size:12px;line-height:12px;color:#008000;transform:scaleX(0.9);transform-origin:0 0;">1</div>
<div class="t" style="left:1.50px;top:466.00px;font-size:12px;line-height:12px;color:#008000;transform:scaleX(0.9);transform-origin:0 0;">17:52:07</div>
<div class="t" style="left:86.20px;top:466.00px;font-size:12px;line-height:12px;color:#008000;transform:scaleX(0.9);transform-origin:0 0;">1098</div>
<div class="t" style="left:171.20px;top:466.00px;font-size:12px;line-height:12px;color:#008000;transform:scaleX(0.9);transform-origin:0 0;">2</div>
<div class="t" style="left:1.50px;top:480.00px;font-size:12px;line-height:12px;color:#008000;transform:scaleX(0.9);transform-origin:0 0;">17:52:07</div>
<div class="t" style="left:86.20px;top:480.00px;font-size:12px;line-height:12px;color:#008000;transform:scaleX(0.9);transform-origin:0 0;">1098</div>
<div class="t" style="left:171.20px;top:480.00px;font-size:12px;line-height:12px;color:#008000;transform:scaleX(0.9);transform-origin:0 0;">1</div>
<div class="t" style="left:1.50px;top:493.00px;font-size:12px;line-height:12px;color:#008000;transform:scaleX(0.9);transform-origin:0 0;">17:52:07</div>
<div class="t" style="left:86.20px;top:493.00px;font-size:12px;line-height:12px;color:#008000;transform:scaleX(0.9);transform-origin:0 0;">1098</div>
<div class="t" style="left:171.20px;top:493.00px;font-size:12px;line-height:12px;color:#008000;transform:scaleX(0.9);transform-origin:0 0;">68</div>
</div>
<div class="ab" style="left:524px;top:109px;width:18px;height:500px;background:repeating-conic-gradient(#D4D0C8 0 25%,#fff 0 50%) 0 0/2px 2px"></div>
<div class="ab raised" style="left:524px;top:109px;width:18px;height:16px"><svg class="ab" style="left:4px;top:5px" width="7" height="4"><path d="M3.5 0L7 4H0Z" fill="#000"/></svg></div>
<div class="ab raised" style="left:524px;top:125px;width:18px;height:8px"></div>
<div class="ab raised" style="left:524px;top:593px;width:18px;height:16px"><svg class="ab" style="left:4px;top:5px" width="7" height="4"><path d="M0 0H7L3.5 4Z" fill="#000"/></svg></div>
<div class="ab" style="left:546px;top:109px;width:309px;height:500px;background:#FAEBD7"></div>
<div class="t" style="left:547.80px;top:112.00px;font-size:12px;line-height:12px;color:#008000;transform:scaleX(0.9);transform-origin:0 0;">17:52:08</div>
<div class="t" style="left:632.80px;top:112.00px;font-size:12px;line-height:12px;color:#008000;transform:scaleX(0.9);transform-origin:0 0;">1100,5</div>
<div class="t" style="left:718.20px;top:112.00px;font-size:12px;line-height:12px;color:#008000;transform:scaleX(0.9);transform-origin:0 0;">2420</div>
<div class="t" style="left:547.80px;top:125.00px;font-size:12px;line-height:12px;color:#008000;transform:scaleX(0.9);transform-origin:0 0;">17:52:07</div>
<div class="t" style="left:632.80px;top:125.00px;font-size:12px;line-height:12px;color:#008000;transform:scaleX(0.9);transform-origin:0 0;">1100,25</div>
<div class="t" style="left:718.20px;top:125.00px;font-size:12px;line-height:12px;color:#008000;transform:scaleX(0.9);transform-origin:0 0;">1979</div>
<div class="t" style="left:547.80px;top:138.00px;font-size:12px;line-height:12px;color:#008000;transform:scaleX(0.9);transform-origin:0 0;">17:52:11</div>
<div class="t" style="left:632.80px;top:138.00px;font-size:12px;line-height:12px;color:#008000;transform:scaleX(0.9);transform-origin:0 0;">1100</div>
<div class="t" style="left:718.20px;top:138.00px;font-size:12px;line-height:12px;color:#008000;transform:scaleX(0.9);transform-origin:0 0;">2225</div>
<div class="t" style="left:547.80px;top:151.00px;font-size:12px;line-height:12px;color:#008000;transform:scaleX(0.9);transform-origin:0 0;">17:52:08</div>
<div class="t" style="left:632.80px;top:151.00px;font-size:12px;line-height:12px;color:#008000;transform:scaleX(0.9);transform-origin:0 0;">1099,75</div>
<div class="t" style="left:718.20px;top:151.00px;font-size:12px;line-height:12px;color:#008000;transform:scaleX(0.9);transform-origin:0 0;">2600</div>
<div class="t" style="left:547.80px;top:165.00px;font-size:12px;line-height:12px;color:#008000;transform:scaleX(0.9);transform-origin:0 0;">17:52:09</div>
<div class="t" style="left:632.80px;top:165.00px;font-size:12px;line-height:12px;color:#008000;transform:scaleX(0.9);transform-origin:0 0;">1099,5</div>
<div class="t" style="left:718.20px;top:165.00px;font-size:12px;line-height:12px;color:#008000;transform:scaleX(0.9);transform-origin:0 0;">2520</div>
<div class="t" style="left:547.80px;top:178.00px;font-size:12px;line-height:12px;color:#008000;transform:scaleX(0.9);transform-origin:0 0;">17:52:08</div>
<div class="t" style="left:632.80px;top:178.00px;font-size:12px;line-height:12px;color:#008000;transform:scaleX(0.9);transform-origin:0 0;">1099,25</div>
<div class="t" style="left:718.20px;top:178.00px;font-size:12px;line-height:12px;color:#008000;transform:scaleX(0.9);transform-origin:0 0;">2368</div>
<div class="t" style="left:547.80px;top:191.00px;font-size:12px;line-height:12px;color:#008000;transform:scaleX(0.9);transform-origin:0 0;">17:52:11</div>
<div class="t" style="left:632.80px;top:191.00px;font-size:12px;line-height:12px;color:#008000;transform:scaleX(0.9);transform-origin:0 0;">1099</div>
<div class="t" style="left:718.20px;top:191.00px;font-size:12px;line-height:12px;color:#008000;transform:scaleX(0.9);transform-origin:0 0;">1471</div>
<div class="t" style="left:547.80px;top:204.00px;font-size:12px;line-height:12px;color:#008000;transform:scaleX(0.9);transform-origin:0 0;">17:52:11</div>
<div class="t" style="left:632.80px;top:204.00px;font-size:12px;line-height:12px;color:#008000;transform:scaleX(0.9);transform-origin:0 0;">1098,75</div>
<div class="t" style="left:718.20px;top:204.00px;font-size:12px;line-height:12px;color:#008000;transform:scaleX(0.9);transform-origin:0 0;">1363</div>
<div class="t" style="left:547.80px;top:218.00px;font-size:12px;line-height:12px;color:#008000;transform:scaleX(0.9);transform-origin:0 0;">17:52:11</div>
<div class="t" style="left:632.80px;top:218.00px;font-size:12px;line-height:12px;color:#008000;transform:scaleX(0.9);transform-origin:0 0;">1098,5</div>
<div class="t" style="left:718.20px;top:218.00px;font-size:12px;line-height:12px;color:#008000;transform:scaleX(0.9);transform-origin:0 0;">598</div>
<div class="t" style="left:547.80px;top:231.00px;font-size:12px;line-height:12px;color:#008000;transform:scaleX(0.9);transform-origin:0 0;">17:52:11</div>
<div class="t" style="left:632.80px;top:231.00px;font-size:12px;line-height:12px;color:#008000;transform:scaleX(0.9);transform-origin:0 0;">1098,25</div>
<div class="t" style="left:718.20px;top:231.00px;font-size:12px;line-height:12px;color:#008000;transform:scaleX(0.9);transform-origin:0 0;">318</div>
<div class="t" style="left:547.80px;top:257.00px;font-size:12px;line-height:12px;color:#FF0000;transform:scaleX(0.9);transform-origin:0 0;">17:52:11</div>
<div class="t" style="left:632.80px;top:257.00px;font-size:12px;line-height:12px;color:#FF0000;transform:scaleX(0.9);transform-origin:0 0;">1098</div>
<div class="t" style="left:718.20px;top:257.00px;font-size:12px;line-height:12px;color:#FF0000;transform:scaleX(0.9);transform-origin:0 0;">122</div>
<div class="t" style="left:547.80px;top:271.00px;font-size:12px;line-height:12px;color:#FF0000;transform:scaleX(0.9);transform-origin:0 0;">17:52:11</div>
<div class="t" style="left:632.80px;top:271.00px;font-size:12px;line-height:12px;color:#FF0000;transform:scaleX(0.9);transform-origin:0 0;">1097,75</div>
<div class="t" style="left:718.20px;top:271.00px;font-size:12px;line-height:12px;color:#FF0000;transform:scaleX(0.9);transform-origin:0 0;">728</div>
<div class="t" style="left:547.80px;top:284.00px;font-size:12px;line-height:12px;color:#FF0000;transform:scaleX(0.9);transform-origin:0 0;">17:52:11</div>
<div class="t" style="left:632.80px;top:284.00px;font-size:12px;line-height:12px;color:#FF0000;transform:scaleX(0.9);transform-origin:0 0;">1097,5</div>
<div class="t" style="left:718.20px;top:284.00px;font-size:12px;line-height:12px;color:#FF0000;transform:scaleX(0.9);transform-origin:0 0;">1615</div>
<div class="t" style="left:547.80px;top:297.00px;font-size:12px;line-height:12px;color:#FF0000;transform:scaleX(0.9);transform-origin:0 0;">17:52:11</div>
<div class="t" style="left:632.80px;top:297.00px;font-size:12px;line-height:12px;color:#FF0000;transform:scaleX(0.9);transform-origin:0 0;">1097,25</div>
<div class="t" style="left:718.20px;top:297.00px;font-size:12px;line-height:12px;color:#FF0000;transform:scaleX(0.9);transform-origin:0 0;">1611</div>
<div class="t" style="left:547.80px;top:310.00px;font-size:12px;line-height:12px;color:#FF0000;transform:scaleX(0.9);transform-origin:0 0;">17:52:11</div>
<div class="t" style="left:632.80px;top:310.00px;font-size:12px;line-height:12px;color:#FF0000;transform:scaleX(0.9);transform-origin:0 0;">1097</div>
<div class="t" style="left:718.20px;top:310.00px;font-size:12px;line-height:12px;color:#FF0000;transform:scaleX(0.9);transform-origin:0 0;">1371</div>
<div class="t" style="left:547.80px;top:324.00px;font-size:12px;line-height:12px;color:#FF0000;transform:scaleX(0.9);transform-origin:0 0;">17:52:10</div>
<div class="t" style="left:632.80px;top:324.00px;font-size:12px;line-height:12px;color:#FF0000;transform:scaleX(0.9);transform-origin:0 0;">1096,75</div>
<div class="t" style="left:718.20px;top:324.00px;font-size:12px;line-height:12px;color:#FF0000;transform:scaleX(0.9);transform-origin:0 0;">1512</div>
<div class="t" style="left:547.80px;top:337.00px;font-size:12px;line-height:12px;color:#FF0000;transform:scaleX(0.9);transform-origin:0 0;">17:52:09</div>
<div class="t" style="left:632.80px;top:337.00px;font-size:12px;line-height:12px;color:#FF0000;transform:scaleX(0.9);transform-origin:0 0;">1096,5</div>
<div class="t" style="left:718.20px;top:337.00px;font-size:12px;line-height:12px;color:#FF0000;transform:scaleX(0.9);transform-origin:0 0;">1415</div>
<div class="t" style="left:547.80px;top:350.00px;font-size:12px;line-height:12px;color:#FF0000;transform:scaleX(0.9);transform-origin:0 0;">17:52:11</div>
<div class="t" style="left:632.80px;top:350.00px;font-size:12px;line-height:12px;color:#FF0000;transform:scaleX(0.9);transform-origin:0 0;">1096,25</div>
<div class="t" style="left:718.20px;top:350.00px;font-size:12px;line-height:12px;color:#FF0000;transform:scaleX(0.9);transform-origin:0 0;">1411</div>
<div class="t" style="left:547.80px;top:363.00px;font-size:12px;line-height:12px;color:#FF0000;transform:scaleX(0.9);transform-origin:0 0;">17:52:09</div>
<div class="t" style="left:632.80px;top:363.00px;font-size:12px;line-height:12px;color:#FF0000;transform:scaleX(0.9);transform-origin:0 0;">1096</div>
<div class="t" style="left:718.20px;top:363.00px;font-size:12px;line-height:12px;color:#FF0000;transform:scaleX(0.9);transform-origin:0 0;">1206</div>
<div class="t" style="left:547.80px;top:377.00px;font-size:12px;line-height:12px;color:#FF0000;transform:scaleX(0.9);transform-origin:0 0;">17:52:11</div>
<div class="t" style="left:632.80px;top:377.00px;font-size:12px;line-height:12px;color:#FF0000;transform:scaleX(0.9);transform-origin:0 0;">1095,75</div>
<div class="t" style="left:718.20px;top:377.00px;font-size:12px;line-height:12px;color:#FF0000;transform:scaleX(0.9);transform-origin:0 0;">1114</div>
<div class="ab" style="left:531px;top:93px;width:228px;height:153px;border:2px solid #5A9E2A;filter:drop-shadow(4px 4px 2px rgba(40,30,20,.42))"></div>
<div class="ab" style="left:530px;top:250px;width:228px;height:146px;border:2px solid #C00000;filter:drop-shadow(4px 4px 2px rgba(40,30,20,.42))"></div>
<div class="ab" style="left:4px;top:609px;width:851px;height:1px;background:#fff"></div>
<div class="ab" style="left:6px;top:612px;width:109px;height:17px;background:#228B22"></div>
<div class="t" style="left:8.80px;top:615.30px;font-size:12px;line-height:12px;color:#fff;transform:scaleX(0.886);transform-origin:0 0;">Connected to Rithmic</div>
<svg class="ab" style="left:841px;top:617px" width="12" height="12"><g fill="#808080"><rect x="9" y="1" width="2" height="2"/><rect x="6" y="4" width="2" height="2"/><rect x="9" y="4" width="2" height="2"/><rect x="3" y="7" width="2" height="2"/><rect x="6" y="7" width="2" height="2"/><rect x="9" y="7" width="2" height="2"/></g></svg>
<div class="ab" style="left:859px;top:430px;width:469px;height:206px;background:#fff"></div>
<div class="t" style="left:859.50px;top:443.58px;font-size:13px;line-height:13px;font-family:'Liberation Mono',monospace;color:#222"><span style="color:#0000FF">l</span>)tickS</div>
<div class="ab" style="left:858px;top:0;width:470px;height:431px;background:#D4D0C8;border:1px solid;border-color:#D4D0C8 #404040 #404040 #D4D0C8;box-shadow:inset 1px 1px 0 #fff, inset -1px -1px 0 #808080"></div>
<div class="ab" style="left:862px;top:4px;width:462px;height:18px;background:linear-gradient(to right,#0A246A,#A6CAF0)"></div>
<svg class="ab" style="left:865px;top:6px" width="14" height="14" viewBox="0 0 14 14">
<rect width="14" height="14" fill="#8c8c98"/>
<rect x="1" y="1" width="3" height="3" fill="#ffffff"/><rect x="5" y="1" width="4" height="3" fill="#e0e0f8"/><rect x="10" y="1" width="3" height="3" fill="#e0e0f8"/>
<rect x="1" y="5" width="3" height="4" fill="#f8c050"/><rect x="5" y="5" width="4" height="4" fill="#f8b040"/><rect x="10" y="5" width="3" height="4" fill="#f0a030"/>
<rect x="1" y="10" width="3" height="3" fill="#e8e8ff"/><rect x="5" y="10" width="4" height="3" fill="#e0e0f8"/><rect x="10" y="10" width="3" height="3" fill="#e0e0f8"/>
</svg>
<div class="t" style="left:881.60px;top:8.11px;font-size:11.5px;line-height:11.5px;color:#fff;font-weight:bold;transform:scaleX(1.045);transform-origin:0 0;">Level II - ES 09-10</div>
<div class="ab" style="left:1255px;top:6px;width:14px;height:14px;background:#D4D0C8;border:1px solid #808080;box-shadow:inset 0 0 0 1px #8a8a8a"></div><div class="ab" style="left:1260px;top:9px;width:1.5px;height:9px;background:#000"></div><div class="ab" style="left:1260px;top:16.5px;width:6px;height:1.5px;background:#000"></div>
<div class="ab raised" style="left:1272px;top:6px;width:16px;height:14px"><div class="ab" style="left:4px;top:8px;width:6px;height:2px;background:#000"></div></div>
<div class="ab raised" style="left:1288px;top:6px;width:16px;height:14px"><div class="ab" style="left:3px;top:2px;width:9px;height:8px;border:1px solid #000;border-top-width:2px"></div></div>
<div class="ab raised" style="left:1307px;top:6px;width:16px;height:14px"><svg class="ab" style="left:3px;top:2px" width="9" height="8"><path d="M1 0.5L8 7.5M8 0.5L1 7.5" stroke="#000" stroke-width="1.7"/></svg></div>
<div class="ab" style="left:862px;top:24px;width:462px;height:40px;border:1px solid;border-color:#808080 #fff #fff #808080;box-shadow:inset 1px 1px 0 #404040"></div>
<div class="hdr" style="left:865px;top:26px;width:49px;height:19px"></div>
<div class="t" style="left:865.00px;top:29.80px;font-size:12px;line-height:12px;width:49px;text-align:center;transform:scaleX(0.88);transform-origin:50% 0;">Ask</div>
<div class="ab" style="left:865px;top:45px;width:49px;height:18px;background:#F0FFF0"></div>
<div class="t" style="left:866.00px;top:48.60px;font-size:12px;line-height:12px;width:49px;text-align:center;transform:scaleX(0.91);transform-origin:50% 0;">1098,2</div>
<div class="ab" style="left:914px;top:45px;width:1px;height:18px;background:#000"></div>
<div class="hdr" style="left:915px;top:26px;width:49px;height:19px"></div>
<div class="t" style="left:915.00px;top:29.80px;font-size:12px;line-height:12px;width:49px;text-align:center;transform:scaleX(0.88);transform-origin:50% 0;">Bid</div>
<div class="ab" style="left:915px;top:45px;width:49px;height:18px;background:#F0FFF0"></div>
<div class="t" style="left:916.00px;top:48.60px;font-size:12px;line-height:12px;width:49px;text-align:center;transform:scaleX(0.91);transform-origin:50% 0;">1098,00</div>
<div class="ab" style="left:964px;top:45px;width:1px;height:18px;background:#000"></div>
<div class="hdr" style="left:965px;top:26px;width:49px;height:19px"></div>
<div class="t" style="left:965.00px;top:29.80px;font-size:12px;line-height:12px;width:49px;text-align:center;transform:scaleX(0.88);transform-origin:50% 0;">Last</div>
<div class="ab" style="left:965px;top:45px;width:49px;height:18px;background:#FFF0F5"></div>
<div class="t" style="left:966.00px;top:48.60px;font-size:12px;line-height:12px;width:49px;text-align:center;transform:scaleX(0.91);transform-origin:50% 0;">1098,00</div>
<div class="ab" style="left:1014px;top:45px;width:1px;height:18px;background:#000"></div>
<div class="hdr" style="left:1015px;top:26px;width:49px;height:19px"></div>
<div class="t" style="left:1015.00px;top:29.80px;font-size:12px;line-height:12px;width:49px;text-align:center;transform:scaleX(0.88);transform-origin:50% 0;">Close</div>
<div class="ab" style="left:1015px;top:45px;width:49px;height:18px;background:#fff"></div>
<div class="t" style="left:1016.00px;top:48.60px;font-size:12px;line-height:12px;width:49px;text-align:center;transform:scaleX(0.91);transform-origin:50% 0;">1102,50</div>
<div class="ab" style="left:1064px;top:45px;width:1px;height:18px;background:#000"></div>
<div class="hdr" style="left:1065px;top:26px;width:49px;height:19px"></div>
<div class="t" style="left:1065.00px;top:29.80px;font-size:12px;line-height:12px;width:49px;text-align:center;transform:scaleX(0.88);transform-origin:50% 0;">Open</div>
<div class="ab" style="left:1065px;top:45px;width:49px;height:18px;background:#fff"></div>
<div class="t" style="left:1066.00px;top:48.60px;font-size:12px;line-height:12px;width:49px;text-align:center;transform:scaleX(0.91);transform-origin:50% 0;">1102,50</div>
<div class="ab" style="left:1114px;top:45px;width:1px;height:18px;background:#000"></div>
<div class="hdr" style="left:1115px;top:26px;width:49px;height:19px"></div>
<div class="t" style="left:1115.00px;top:29.80px;font-size:12px;line-height:12px;width:49px;text-align:center;transform:scaleX(0.88);transform-origin:50% 0;">High</div>
<div class="ab" style="left:1115px;top:45px;width:49px;height:18px;background:#fff"></div>
<div class="t" style="left:1116.00px;top:48.60px;font-size:12px;line-height:12px;width:49px;text-align:center;transform:scaleX(0.91);transform-origin:50% 0;">1113,00</div>
<div class="ab" style="left:1164px;top:45px;width:1px;height:18px;background:#000"></div>
<div class="hdr" style="left:1165px;top:26px;width:49px;height:19px"></div>
<div class="t" style="left:1165.00px;top:29.80px;font-size:12px;line-height:12px;width:49px;text-align:center;transform:scaleX(0.88);transform-origin:50% 0;">Low</div>
<div class="ab" style="left:1165px;top:45px;width:49px;height:18px;background:#fff"></div>
<div class="t" style="left:1166.00px;top:48.60px;font-size:12px;line-height:12px;width:49px;text-align:center;transform:scaleX(0.91);transform-origin:50% 0;">1088,75</div>
<div class="ab" style="left:1214px;top:45px;width:1px;height:18px;background:#000"></div>
<div class="hdr" style="left:1215px;top:26px;width:49px;height:19px"></div>
<div class="t" style="left:1215.00px;top:29.80px;font-size:12px;line-height:12px;width:49px;text-align:center;transform:scaleX(0.88);transform-origin:50% 0;">Net Chg</div>
<div class="ab" style="left:1215px;top:45px;width:49px;height:18px;background:#FFF0F5"></div>
<div class="t" style="left:1216.00px;top:48.60px;font-size:12px;line-height:12px;width:49px;text-align:center;transform:scaleX(0.91);transform-origin:50% 0;">-4,50</div>
<div class="ab" style="left:1264px;top:45px;width:1px;height:18px;background:#000"></div>
<div class="hdr" style="left:1265px;top:26px;width:57px;height:19px"></div>
<div class="t" style="left:1265.00px;top:29.80px;font-size:12px;line-height:12px;width:57px;text-align:center;transform:scaleX(0.88);transform-origin:50% 0;">Tot Vol</div>
<div class="ab" style="left:1265px;top:45px;width:57px;height:18px;background:#fff"></div>
<div class="t" style="left:1266.00px;top:48.60px;font-size:12px;line-height:12px;width:57px;text-align:center;transform:scaleX(0.91);transform-origin:50% 0;">1,54M</div>
<div class="ab" style="left:1322px;top:45px;width:1px;height:18px;background:#000"></div>
<div class="ab" style="left:864px;top:45px;width:2px;height:18px;background:#000"></div>
<div class="ab" style="left:862px;top:65px;width:439px;height:1px;background:#fff"></div>
<div class="hdr" style="left:862px;top:66px;width:72px;height:19px;border-color:#808080 #fff #fff #808080"></div>
<div class="t" style="left:862.00px;top:69.80px;font-size:12px;line-height:12px;width:72px;text-align:center;transform:scaleX(0.88);transform-origin:50% 0;">Price</div>
<div class="hdr" style="left:937px;top:66px;width:71px;height:19px;border-color:#808080 #fff #fff #808080"></div>
<div class="t" style="left:937.00px;top:69.80px;font-size:12px;line-height:12px;width:71px;text-align:center;transform:scaleX(0.88);transform-origin:50% 0;">Depth</div>
<div class="hdr" style="left:1011px;top:66px;width:72px;height:19px;border-color:#808080 #fff #fff #808080"></div>
<div class="t" style="left:1011.00px;top:69.80px;font-size:12px;line-height:12px;width:72px;text-align:center;transform:scaleX(0.88);transform-origin:50% 0;">Size</div>
<div class="hdr" style="left:1086px;top:66px;width:72px;height:19px;border-color:#808080 #fff #fff #808080"></div>
<div class="t" style="left:1086.00px;top:69.80px;font-size:12px;line-height:12px;width:72px;text-align:center;transform:scaleX(0.88);transform-origin:50% 0;">Spread</div>
<div class="hdr" style="left:1161px;top:66px;width:139px;height:19px;border-color:#808080 #fff #fff #808080"></div>
<div class="t" style="left:1161.00px;top:69.80px;font-size:12px;line-height:12px;width:139px;text-align:center;transform:scaleX(0.88);transform-origin:50% 0;">Graph</div>
<div class="ab raised" style="left:1301px;top:66px;width:23px;height:143px"></div>
<div class="ab" style="left:1301px;top:209px;width:23px;height:1px;background:repeating-linear-gradient(90deg,#fff 0 1px,#D4D0C8 1px 2px)"></div>
<div class="ab raised" style="left:1301px;top:66px;width:23px;height:15px"><svg class="ab" style="left:8px;top:5px" width="7" height="4"><path d="M3.5 0L7 4H0Z" fill="#000"/></svg></div>
<div class="ab raised" style="left:1301px;top:210px;width:23px;height:16px"><svg class="ab" style="left:8px;top:6px" width="7" height="4"><path d="M0 0H7L3.5 4Z" fill="#000"/></svg></div>
<div class="ab" style="left:862px;top:85px;width:440px;height:141px;background:#fff"></div>
<div class="ab" style="left:862px;top:86px;width:300px;height:13px;background:#FFFF00"></div>
<div class="t" style="left:866.00px;top:87.40px;font-size:12px;line-height:12px;transform:scaleX(0.9);transform-origin:0 0;">1098,00 * 1098,25</div>
<div class="t" style="left:900.00px;top:87.40px;font-size:12px;line-height:12px;width:108px;text-align:right;transform:scaleX(0.89);transform-origin:100% 0;">1 * 1</div>
<div class="t" style="left:980.00px;top:87.40px;font-size:12px;line-height:12px;width:104.2px;text-align:right;transform:scaleX(0.89);transform-origin:100% 0;">167 * 303</div>
<div class="t" style="left:1080.00px;top:87.40px;font-size:12px;line-height:12px;width:79.1px;text-align:right;transform:scaleX(0.89);transform-origin:100% 0;">0,25</div>
<div class="ab" style="left:862px;top:99px;width:300px;height:13px;background:#FFA500"></div>
<div class="t" style="left:866.00px;top:100.47px;font-size:12px;line-height:12px;transform:scaleX(0.9);transform-origin:0 0;">1097,75 * 1098,50</div>
<div class="t" style="left:900.00px;top:100.47px;font-size:12px;line-height:12px;width:108px;text-align:right;transform:scaleX(0.89);transform-origin:100% 0;">1 * 1</div>
<div class="t" style="left:980.00px;top:100.47px;font-size:12px;line-height:12px;width:104.2px;text-align:right;transform:scaleX(0.89);transform-origin:100% 0;">727 * 595</div>
<div class="t" style="left:1080.00px;top:100.47px;font-size:12px;line-height:12px;width:79.1px;text-align:right;transform:scaleX(0.89);transform-origin:100% 0;">0,75</div>
<div class="ab" style="left:862px;top:112px;width:300px;height:13px;background:#FF0000"></div>
<div class="t" style="left:866.00px;top:113.54px;font-size:12px;line-height:12px;transform:scaleX(0.9);transform-origin:0 0;">1097,50 * 1098,75</div>
<div class="t" style="left:900.00px;top:113.54px;font-size:12px;line-height:12px;width:108px;text-align:right;transform:scaleX(0.89);transform-origin:100% 0;">1 * 1</div>
<div class="t" style="left:980.00px;top:113.54px;font-size:12px;line-height:12px;width:104.2px;text-align:right;transform:scaleX(0.89);transform-origin:100% 0;">1.614 * 1.363</div>
<div class="t" style="left:1080.00px;top:113.54px;font-size:12px;line-height:12px;width:79.1px;text-align:right;transform:scaleX(0.89);transform-origin:100% 0;">1,25</div>
<div class="ab" style="left:862px;top:125px;width:300px;height:13px;background:#32CD32"></div>
<div class="t" style="left:866.00px;top:126.61px;font-size:12px;line-height:12px;transform:scaleX(0.9);transform-origin:0 0;">1097,25 * 1099,00</div>
<div class="t" style="left:900.00px;top:126.61px;font-size:12px;line-height:12px;width:108px;text-align:right;transform:scaleX(0.89);transform-origin:100% 0;">1 * 1</div>
<div class="t" style="left:980.00px;top:126.61px;font-size:12px;line-height:12px;width:104.2px;text-align:right;transform:scaleX(0.89);transform-origin:100% 0;">1.613 * 1.476</div>
<div class="t" style="left:1080.00px;top:126.61px;font-size:12px;line-height:12px;width:79.1px;text-align:right;transform:scaleX(0.89);transform-origin:100% 0;">1,75</div>
<div class="ab" style="left:862px;top:138px;width:300px;height:13px;background:#0000FF"></div>
<div class="t" style="left:866.00px;top:139.68px;font-size:12px;line-height:12px;transform:scaleX(0.9);transform-origin:0 0;">1097,00 * 1099,25</div>
<div class="t" style="left:900.00px;top:139.68px;font-size:12px;line-height:12px;width:108px;text-align:right;transform:scaleX(0.89);transform-origin:100% 0;">1 * 1</div>
<div class="t" style="left:980.00px;top:139.68px;font-size:12px;line-height:12px;width:104.2px;text-align:right;transform:scaleX(0.89);transform-origin:100% 0;">1.371 * 2.368</div>
<div class="t" style="left:1080.00px;top:139.68px;font-size:12px;line-height:12px;width:79.1px;text-align:right;transform:scaleX(0.89);transform-origin:100% 0;">2,25</div>
<div class="ab" style="left:862px;top:151px;width:300px;height:13px;background:#FFF8DC"></div>
<div class="t" style="left:866.00px;top:152.75px;font-size:12px;line-height:12px;transform:scaleX(0.9);transform-origin:0 0;">1096,75 * 1099,50</div>
<div class="t" style="left:900.00px;top:152.75px;font-size:12px;line-height:12px;width:108px;text-align:right;transform:scaleX(0.89);transform-origin:100% 0;">1 * 1</div>
<div class="t" style="left:980.00px;top:152.75px;font-size:12px;line-height:12px;width:104.2px;text-align:right;transform:scaleX(0.89);transform-origin:100% 0;">1.512 * 2.520</div>
<div class="t" style="left:1080.00px;top:152.75px;font-size:12px;line-height:12px;width:79.1px;text-align:right;transform:scaleX(0.89);transform-origin:100% 0;">2,75</div>
<div class="ab" style="left:862px;top:164px;width:300px;height:13px;background:#FFE4C4"></div>
<div class="t" style="left:866.00px;top:165.82px;font-size:12px;line-height:12px;transform:scaleX(0.9);transform-origin:0 0;">1096,50 * 1099,75</div>
<div class="t" style="left:900.00px;top:165.82px;font-size:12px;line-height:12px;width:108px;text-align:right;transform:scaleX(0.89);transform-origin:100% 0;">1 * 1</div>
<div class="t" style="left:980.00px;top:165.82px;font-size:12px;line-height:12px;width:104.2px;text-align:right;transform:scaleX(0.89);transform-origin:100% 0;">1.415 * 2.600</div>
<div class="t" style="left:1080.00px;top:165.82px;font-size:12px;line-height:12px;width:79.1px;text-align:right;transform:scaleX(0.89);transform-origin:100% 0;">3,25</div>
<div class="ab" style="left:862px;top:177px;width:300px;height:14px;background:#FFA07A"></div>
<div class="t" style="left:866.00px;top:178.89px;font-size:12px;line-height:12px;transform:scaleX(0.9);transform-origin:0 0;">1096,25 * 1100,00</div>
<div class="t" style="left:900.00px;top:178.89px;font-size:12px;line-height:12px;width:108px;text-align:right;transform:scaleX(0.89);transform-origin:100% 0;">1 * 1</div>
<div class="t" style="left:980.00px;top:178.89px;font-size:12px;line-height:12px;width:104.2px;text-align:right;transform:scaleX(0.89);transform-origin:100% 0;">1.411 * 2.255</div>
<div class="t" style="left:1080.00px;top:178.89px;font-size:12px;line-height:12px;width:79.1px;text-align:right;transform:scaleX(0.89);transform-origin:100% 0;">3,75</div>
<div class="ab" style="left:862px;top:191px;width:300px;height:13px;background:#20B2AA"></div>
<div class="t" style="left:866.00px;top:191.96px;font-size:12px;line-height:12px;transform:scaleX(0.9);transform-origin:0 0;">1096,00 * 1100,25</div>
<div class="t" style="left:900.00px;top:191.96px;font-size:12px;line-height:12px;width:108px;text-align:right;transform:scaleX(0.89);transform-origin:100% 0;">1 * 1</div>
<div class="t" style="left:980.00px;top:191.96px;font-size:12px;line-height:12px;width:104.2px;text-align:right;transform:scaleX(0.89);transform-origin:100% 0;">1.206 * 1.979</div>
<div class="t" style="left:1080.00px;top:191.96px;font-size:12px;line-height:12px;width:79.1px;text-align:right;transform:scaleX(0.89);transform-origin:100% 0;">4,25</div>
<div class="ab" style="left:862px;top:204px;width:300px;height:13px;background:#B0C4DE"></div>
<div class="t" style="left:866.00px;top:205.03px;font-size:12px;line-height:12px;transform:scaleX(0.9);transform-origin:0 0;">1095,75 * 1100,50</div>
<div class="t" style="left:900.00px;top:205.03px;font-size:12px;line-height:12px;width:108px;text-align:right;transform:scaleX(0.89);transform-origin:100% 0;">1 * 1</div>
<div class="t" style="left:980.00px;top:205.03px;font-size:12px;line-height:12px;width:104.2px;text-align:right;transform:scaleX(0.89);transform-origin:100% 0;">1.111 * 2.420</div>
<div class="t" style="left:1080.00px;top:205.03px;font-size:12px;line-height:12px;width:79.1px;text-align:right;transform:scaleX(0.89);transform-origin:100% 0;">4,75</div>
<div class="ab" style="left:1162px;top:86px;width:139px;height:140px;background:#fff;border:1px solid #000"></div>
<div class="ab" style="left:1226px;top:87px;width:15px;height:12px;background:#FFFF00"></div>
<div class="ab" style="left:1202px;top:100px;width:47px;height:12px;background:#FFA500"></div>
<div class="ab" style="left:1163px;top:113px;width:106px;height:12px;background:#FF0000"></div>
<div class="ab" style="left:1164px;top:126px;width:108px;height:12px;background:#32CD32"></div>
<div class="ab" style="left:1174px;top:139px;width:122px;height:12px;background:#0000FF"></div>
<div class="ab" style="left:1168px;top:152px;width:132px;height:12px;background:#FFF8DC"></div>
<div class="ab" style="left:1172px;top:165px;width:128px;height:12px;background:#FFE4C4"></div>
<div class="ab" style="left:1172px;top:178px;width:121px;height:12px;background:#FFA07A"></div>
<div class="ab" style="left:1181px;top:192px;width:105px;height:12px;background:#20B2AA"></div>
<div class="ab" style="left:1185px;top:205px;width:113px;height:12px;background:#B0C4DE"></div>
<div class="ab" style="left:1233px;top:87px;width:1px;height:138px;background:#000"></div>
<div class="ab" style="left:862px;top:226px;width:462px;height:4px;background:#D4D0C8"></div>
<div class="ab sunken" style="left:862px;top:229px;width:219px;height:198px;background:#fff"></div>
<div class="hdr" style="left:864px;top:231px;width:44px;height:20px;border-color:#D4D0C8 #fff #fff #808080"></div>
<div class="t" style="left:862.50px;top:235.40px;font-size:12px;line-height:12px;width:44px;text-align:center;transform:scaleX(0.88);transform-origin:50% 0;">ID</div>
<div class="hdr" style="left:908px;top:231px;width:45px;height:20px;border-color:#D4D0C8 #fff #fff #808080"></div>
<div class="t" style="left:908.00px;top:235.40px;font-size:12px;line-height:12px;width:45px;text-align:center;transform:scaleX(0.88);transform-origin:50% 0;">Price</div>
<div class="hdr" style="left:953px;top:231px;width:45px;height:20px;border-color:#D4D0C8 #fff #fff #808080"></div>
<div class="t" style="left:953.00px;top:235.40px;font-size:12px;line-height:12px;width:45px;text-align:center;transform:scaleX(0.88);transform-origin:50% 0;">Size</div>
<div class="hdr" style="left:998px;top:231px;width:81px;height:20px;border-color:#D4D0C8 #fff #fff #808080"></div>
<div class="t" style="left:998.00px;top:235.40px;font-size:12px;line-height:12px;width:81px;text-align:center;transform:scaleX(0.88);transform-origin:50% 0;">Time</div>
<div class="ab" style="left:864px;top:251px;width:215px;height:13px;background:#FFFF00"></div>
<div class="t" style="left:900.00px;top:251.90px;font-size:12px;line-height:12px;width:51.3px;text-align:right;transform:scaleX(0.89);transform-origin:100% 0;">1098,00</div>
<div class="t" style="left:950.00px;top:251.90px;font-size:12px;line-height:12px;width:45.6px;text-align:right;transform:scaleX(0.89);transform-origin:100% 0;">167</div>
<div class="t" style="left:1000.50px;top:251.90px;font-size:12px;line-height:12px;transform:scaleX(0.89);transform-origin:0 0;">19:52:11</div>
<div class="ab" style="left:864px;top:264px;width:215px;height:13px;background:#FFA500"></div>
<div class="t" style="left:900.00px;top:264.97px;font-size:12px;line-height:12px;width:51.3px;text-align:right;transform:scaleX(0.89);transform-origin:100% 0;">1097,75</div>
<div class="t" style="left:950.00px;top:264.97px;font-size:12px;line-height:12px;width:45.6px;text-align:right;transform:scaleX(0.89);transform-origin:100% 0;">727</div>
<div class="t" style="left:1000.50px;top:264.97px;font-size:12px;line-height:12px;transform:scaleX(0.89);transform-origin:0 0;">19:52:11</div>
<div class="ab" style="left:864px;top:277px;width:215px;height:13px;background:#FF0000"></div>
<div class="t" style="left:900.00px;top:278.04px;font-size:12px;line-height:12px;width:51.3px;text-align:right;transform:scaleX(0.89);transform-origin:100% 0;">1097,50</div>
<div class="t" style="left:950.00px;top:278.04px;font-size:12px;line-height:12px;width:45.6px;text-align:right;transform:scaleX(0.89);transform-origin:100% 0;">1.614</div>
<div class="t" style="left:1000.50px;top:278.04px;font-size:12px;line-height:12px;transform:scaleX(0.89);transform-origin:0 0;">19:52:11</div>
<div class="ab" style="left:864px;top:290px;width:215px;height:13px;background:#32CD32"></div>
<div class="t" style="left:900.00px;top:291.11px;font-size:12px;line-height:12px;width:51.3px;text-align:right;transform:scaleX(0.89);transform-origin:100% 0;">1097,25</div>
<div class="t" style="left:950.00px;top:291.11px;font-size:12px;line-height:12px;width:45.6px;text-align:right;transform:scaleX(0.89);transform-origin:100% 0;">1.613</div>
<div class="t" style="left:1000.50px;top:291.11px;font-size:12px;line-height:12px;transform:scaleX(0.89);transform-origin:0 0;">19:52:11</div>
<div class="ab" style="left:864px;top:303px;width:215px;height:13px;background:#0000FF"></div>
<div class="t" style="left:900.00px;top:304.18px;font-size:12px;line-height:12px;width:51.3px;text-align:right;transform:scaleX(0.89);transform-origin:100% 0;">1097,00</div>
<div class="t" style="left:950.00px;top:304.18px;font-size:12px;line-height:12px;width:45.6px;text-align:right;transform:scaleX(0.89);transform-origin:100% 0;">1.371</div>
<div class="t" style="left:1000.50px;top:304.18px;font-size:12px;line-height:12px;transform:scaleX(0.89);transform-origin:0 0;">19:52:11</div>
<div class="ab" style="left:864px;top:316px;width:215px;height:13px;background:#FFF8DC"></div>
<div class="t" style="left:900.00px;top:317.25px;font-size:12px;line-height:12px;width:51.3px;text-align:right;transform:scaleX(0.89);transform-origin:100% 0;">1096,75</div>
<div class="t" style="left:950.00px;top:317.25px;font-size:12px;line-height:12px;width:45.6px;text-align:right;transform:scaleX(0.89);transform-origin:100% 0;">1.512</div>
<div class="t" style="left:1000.50px;top:317.25px;font-size:12px;line-height:12px;transform:scaleX(0.89);transform-origin:0 0;">19:52:10</div>
<div class="ab" style="left:864px;top:329px;width:215px;height:13px;background:#FFE4C4"></div>
<div class="t" style="left:900.00px;top:330.32px;font-size:12px;line-height:12px;width:51.3px;text-align:right;transform:scaleX(0.89);transform-origin:100% 0;">1096,50</div>
<div class="t" style="left:950.00px;top:330.32px;font-size:12px;line-height:12px;width:45.6px;text-align:right;transform:scaleX(0.89);transform-origin:100% 0;">1.415</div>
<div class="t" style="left:1000.50px;top:330.32px;font-size:12px;line-height:12px;transform:scaleX(0.89);transform-origin:0 0;">19:52:09</div>
<div class="ab" style="left:864px;top:342px;width:215px;height:13px;background:#FFA07A"></div>
<div class="t" style="left:900.00px;top:343.39px;font-size:12px;line-height:12px;width:51.3px;text-align:right;transform:scaleX(0.89);transform-origin:100% 0;">1096,25</div>
<div class="t" style="left:950.00px;top:343.39px;font-size:12px;line-height:12px;width:45.6px;text-align:right;transform:scaleX(0.89);transform-origin:100% 0;">1.411</div>
<div class="t" style="left:1000.50px;top:343.39px;font-size:12px;line-height:12px;transform:scaleX(0.89);transform-origin:0 0;">19:52:11</div>
<div class="ab" style="left:864px;top:355px;width:215px;height:13px;background:#20B2AA"></div>
<div class="t" style="left:900.00px;top:356.46px;font-size:12px;line-height:12px;width:51.3px;text-align:right;transform:scaleX(0.89);transform-origin:100% 0;">1096,00</div>
<div class="t" style="left:950.00px;top:356.46px;font-size:12px;line-height:12px;width:45.6px;text-align:right;transform:scaleX(0.89);transform-origin:100% 0;">1.206</div>
<div class="t" style="left:1000.50px;top:356.46px;font-size:12px;line-height:12px;transform:scaleX(0.89);transform-origin:0 0;">19:52:09</div>
<div class="ab" style="left:864px;top:368px;width:215px;height:13px;background:#B0C4DE"></div>
<div class="t" style="left:900.00px;top:369.53px;font-size:12px;line-height:12px;width:51.3px;text-align:right;transform:scaleX(0.89);transform-origin:100% 0;">1095,75</div>
<div class="t" style="left:950.00px;top:369.53px;font-size:12px;line-height:12px;width:45.6px;text-align:right;transform:scaleX(0.89);transform-origin:100% 0;">1.111</div>
<div class="t" style="left:1000.50px;top:369.53px;font-size:12px;line-height:12px;transform:scaleX(0.89);transform-origin:0 0;">19:52:11</div>
<div class="ab sunken" style="left:1081px;top:229px;width:220px;height:198px;background:#fff"></div>
<div class="hdr" style="left:1083px;top:231px;width:44px;height:20px;border-color:#D4D0C8 #fff #fff #808080"></div>
<div class="t" style="left:1081.50px;top:235.40px;font-size:12px;line-height:12px;width:44px;text-align:center;transform:scaleX(0.88);transform-origin:50% 0;">ID</div>
<div class="hdr" style="left:1127px;top:231px;width:45px;height:20px;border-color:#D4D0C8 #fff #fff #808080"></div>
<div class="t" style="left:1127.00px;top:235.40px;font-size:12px;line-height:12px;width:45px;text-align:center;transform:scaleX(0.88);transform-origin:50% 0;">Price</div>
<div class="hdr" style="left:1172px;top:231px;width:45px;height:20px;border-color:#D4D0C8 #fff #fff #808080"></div>
<div class="t" style="left:1172.00px;top:235.40px;font-size:12px;line-height:12px;width:45px;text-align:center;transform:scaleX(0.88);transform-origin:50% 0;">Size</div>
<div class="hdr" style="left:1217px;top:231px;width:82px;height:20px;border-color:#D4D0C8 #fff #fff #808080"></div>
<div class="t" style="left:1217.00px;top:235.40px;font-size:12px;line-height:12px;width:82px;text-align:center;transform:scaleX(0.88);transform-origin:50% 0;">Time</div>
<div class="ab" style="left:1083px;top:251px;width:216px;height:13px;background:#FFFF00"></div>
<div class="t" style="left:1119.00px;top:251.90px;font-size:12px;line-height:12px;width:51.3px;text-align:right;transform:scaleX(0.89);transform-origin:100% 0;">1098,25</div>
<div class="t" style="left:1169.00px;top:251.90px;font-size:12px;line-height:12px;width:45.6px;text-align:right;transform:scaleX(0.89);transform-origin:100% 0;">303</div>
<div class="t" style="left:1219.50px;top:251.90px;font-size:12px;line-height:12px;transform:scaleX(0.89);transform-origin:0 0;">19:52:11</div>
<div class="ab" style="left:1083px;top:264px;width:216px;height:13px;background:#FFA500"></div>
<div class="t" style="left:1119.00px;top:264.97px;font-size:12px;line-height:12px;width:51.3px;text-align:right;transform:scaleX(0.89);transform-origin:100% 0;">1098,50</div>
<div class="t" style="left:1169.00px;top:264.97px;font-size:12px;line-height:12px;width:45.6px;text-align:right;transform:scaleX(0.89);transform-origin:100% 0;">595</div>
<div class="t" style="left:1219.50px;top:264.97px;font-size:12px;line-height:12px;transform:scaleX(0.89);transform-origin:0 0;">19:52:10</div>
<div class="ab" style="left:1083px;top:277px;width:216px;height:13px;background:#FF0000"></div>
<div class="t" style="left:1119.00px;top:278.04px;font-size:12px;line-height:12px;width:51.3px;text-align:right;transform:scaleX(0.89);transform-origin:100% 0;">1098,75</div>
<div class="t" style="left:1169.00px;top:278.04px;font-size:12px;line-height:12px;width:45.6px;text-align:right;transform:scaleX(0.89);transform-origin:100% 0;">1.363</div>
<div class="t" style="left:1219.50px;top:278.04px;font-size:12px;line-height:12px;transform:scaleX(0.89);transform-origin:0 0;">19:52:11</div>
<div class="ab" style="left:1083px;top:290px;width:216px;height:13px;background:#32CD32"></div>
<div class="t" style="left:1119.00px;top:291.11px;font-size:12px;line-height:12px;width:51.3px;text-align:right;transform:scaleX(0.89);transform-origin:100% 0;">1099,00</div>
<div class="t" style="left:1169.00px;top:291.11px;font-size:12px;line-height:12px;width:45.6px;text-align:right;transform:scaleX(0.89);transform-origin:100% 0;">1.476</div>
<div class="t" style="left:1219.50px;top:291.11px;font-size:12px;line-height:12px;transform:scaleX(0.89);transform-origin:0 0;">19:52:10</div>
<div class="ab" style="left:1083px;top:303px;width:216px;height:13px;background:#0000FF"></div>
<div class="t" style="left:1119.00px;top:304.18px;font-size:12px;line-height:12px;width:51.3px;text-align:right;transform:scaleX(0.89);transform-origin:100% 0;">1099,25</div>
<div class="t" style="left:1169.00px;top:304.18px;font-size:12px;line-height:12px;width:45.6px;text-align:right;transform:scaleX(0.89);transform-origin:100% 0;">2.368</div>
<div class="t" style="left:1219.50px;top:304.18px;font-size:12px;line-height:12px;transform:scaleX(0.89);transform-origin:0 0;">19:52:08</div>
<div class="ab" style="left:1083px;top:316px;width:216px;height:13px;background:#FFF8DC"></div>
<div class="t" style="left:1119.00px;top:317.25px;font-size:12px;line-height:12px;width:51.3px;text-align:right;transform:scaleX(0.89);transform-origin:100% 0;">1099,50</div>
<div class="t" style="left:1169.00px;top:317.25px;font-size:12px;line-height:12px;width:45.6px;text-align:right;transform:scaleX(0.89);transform-origin:100% 0;">2.520</div>
<div class="t" style="left:1219.50px;top:317.25px;font-size:12px;line-height:12px;transform:scaleX(0.89);transform-origin:0 0;">19:52:09</div>
<div class="ab" style="left:1083px;top:329px;width:216px;height:13px;background:#FFE4C4"></div>
<div class="t" style="left:1119.00px;top:330.32px;font-size:12px;line-height:12px;width:51.3px;text-align:right;transform:scaleX(0.89);transform-origin:100% 0;">1099,75</div>
<div class="t" style="left:1169.00px;top:330.32px;font-size:12px;line-height:12px;width:45.6px;text-align:right;transform:scaleX(0.89);transform-origin:100% 0;">2.600</div>
<div class="t" style="left:1219.50px;top:330.32px;font-size:12px;line-height:12px;transform:scaleX(0.89);transform-origin:0 0;">19:52:08</div>
<div class="ab" style="left:1083px;top:342px;width:216px;height:13px;background:#FFA07A"></div>
<div class="t" style="left:1119.00px;top:343.39px;font-size:12px;line-height:12px;width:51.3px;text-align:right;transform:scaleX(0.89);transform-origin:100% 0;">1100,00</div>
<div class="t" style="left:1169.00px;top:343.39px;font-size:12px;line-height:12px;width:45.6px;text-align:right;transform:scaleX(0.89);transform-origin:100% 0;">2.255</div>
<div class="t" style="left:1219.50px;top:343.39px;font-size:12px;line-height:12px;transform:scaleX(0.89);transform-origin:0 0;">19:52:09</div>
<div class="ab" style="left:1083px;top:355px;width:216px;height:13px;background:#20B2AA"></div>
<div class="t" style="left:1119.00px;top:356.46px;font-size:12px;line-height:12px;width:51.3px;text-align:right;transform:scaleX(0.89);transform-origin:100% 0;">1100,25</div>
<div class="t" style="left:1169.00px;top:356.46px;font-size:12px;line-height:12px;width:45.6px;text-align:right;transform:scaleX(0.89);transform-origin:100% 0;">1.979</div>
<div class="t" style="left:1219.50px;top:356.46px;font-size:12px;line-height:12px;transform:scaleX(0.89);transform-origin:0 0;">19:52:07</div>
<div class="ab" style="left:1083px;top:368px;width:216px;height:13px;background:#B0C4DE"></div>
<div class="t" style="left:1119.00px;top:369.53px;font-size:12px;line-height:12px;width:51.3px;text-align:right;transform:scaleX(0.89);transform-origin:100% 0;">1100,50</div>
<div class="t" style="left:1169.00px;top:369.53px;font-size:12px;line-height:12px;width:45.6px;text-align:right;transform:scaleX(0.89);transform-origin:100% 0;">2.420</div>
<div class="t" style="left:1219.50px;top:369.53px;font-size:12px;line-height:12px;transform:scaleX(0.89);transform-origin:0 0;">19:52:08</div>
<div class="ab" style="left:1301px;top:229px;width:24px;height:198px;background:#D4D0C8"></div>
<div class="ab raised" style="left:1301px;top:244px;width:24px;height:166px"></div>
<div class="ab" style="left:1301px;top:410px;width:24px;height:1px;background:repeating-linear-gradient(90deg,#fff 0 1px,#D4D0C8 1px 2px)"></div>
<div class="ab raised" style="left:1301px;top:229px;width:24px;height:15px"><svg class="ab" style="left:7px;top:5px" width="7" height="4"><path d="M3.5 0L7 4H0Z" fill="#000"/></svg></div>
<div class="ab raised" style="left:1301px;top:411px;width:24px;height:16px"><svg class="ab" style="left:7px;top:6px" width="7" height="4"><path d="M0 0H7L3.5 4Z" fill="#000"/></svg></div>
<div class="ab" style="left:882px;top:223px;width:192px;height:168px;border:2px solid #C00000;filter:drop-shadow(4px 4px 2px rgba(40,30,20,.42))"></div>
<div class="ab" style="left:1098px;top:221px;width:192px;height:167px;border:2px solid #5A9E2A;filter:drop-shadow(4px 4px 2px rgba(40,30,20,.42))"></div>
<div class="ab" style="left:912px;top:431px;width:416px;height:94px;background:#D4D0C8;border-left:1px solid #fff;border-bottom:1px solid #404040"></div>
<div class="ab" style="left:916px;top:431px;width:412px;height:66px;border-left:2px solid #404040;border-bottom:2px solid #505050"></div>
<div class="ab" style="left:918px;top:431px;width:410px;height:62px;border-left:1px solid #fff;border-bottom:2px solid #fff"></div>
<div class="ab" style="left:923px;top:431px;width:405px;height:59px;background:#A8A8A8;border-left:2px solid #404040"></div>
<div class="ab" style="left:917px;top:497px;width:411px;height:2px;background:#fff"></div>
<div class="ab" style="left:917px;top:503px;width:111px;height:15px;background:#90EE90;border:1px solid;border-color:#505050 #fff #fff #505050"></div>
<div class="t" style="left:923.80px;top:504.80px;font-size:12px;line-height:12px;transform:scaleX(0.87);transform-origin:0 0;">Connected - Zen-Fire</div>
<div class="ab" style="left:1028px;top:503px;width:300px;height:15px;border:1px solid;border-color:#505050 #D4D0C8 #fff #505050"></div>
</body></html>
